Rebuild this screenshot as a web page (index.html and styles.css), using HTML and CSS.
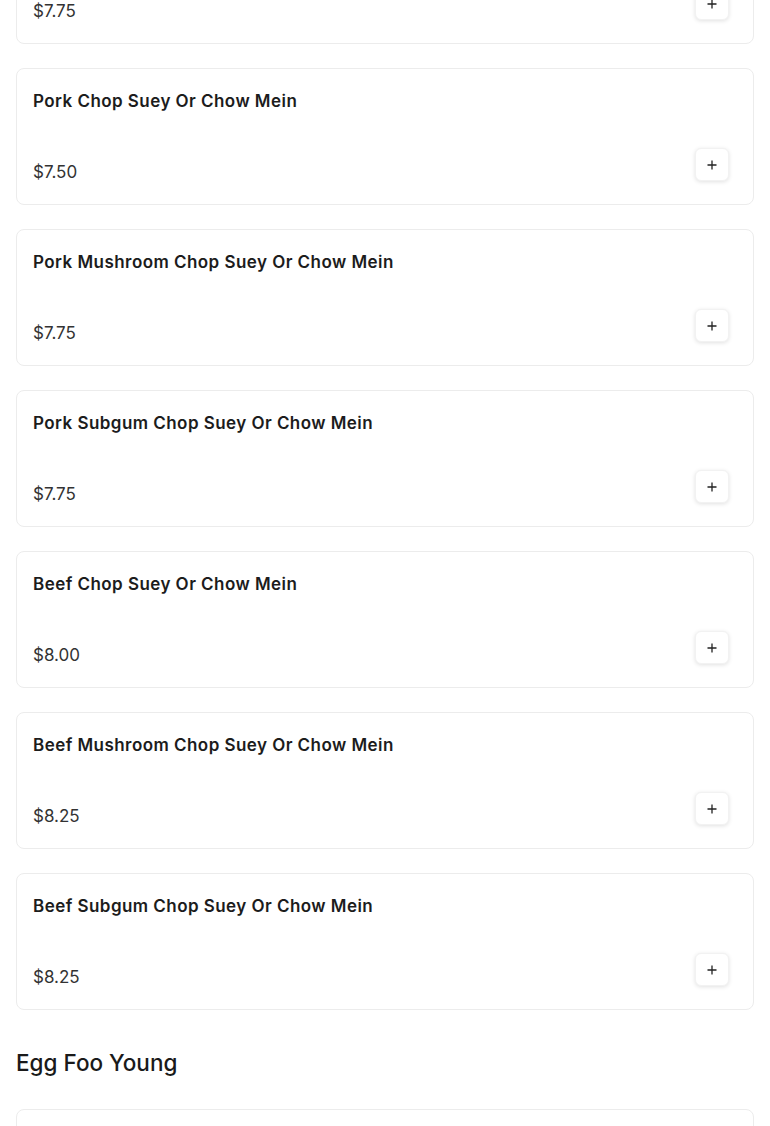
FILE: index.html
```html
<!DOCTYPE html>
<html lang="en">
<head>
  <meta charset="UTF-8">
  <meta name="viewport" content="width=device-width, initial-scale=1.0">
  <title>Menu | Chop Suey</title>
  <link rel="stylesheet" href="styles.css">
</head>
<body>

<div class="menu">
  <div class="item">
    <h3 class="item-name">Pork Subgum Chow Mein</h3>
    <div class="item-foot">
      <span class="price">$7.75</span>
      <button class="add" aria-label="Add"><svg viewBox="0 0 12 12" width="12" height="12"><path d="M6 1.5v9M1.5 6h9" stroke="#222" stroke-width="1.3" fill="none"/></svg></button>
    </div>
  </div>

  <div class="item">
    <h3 class="item-name">Pork Chop Suey Or Chow Mein</h3>
    <div class="item-foot">
      <span class="price">$7.50</span>
      <button class="add" aria-label="Add"><svg viewBox="0 0 12 12" width="12" height="12"><path d="M6 1.5v9M1.5 6h9" stroke="#222" stroke-width="1.3" fill="none"/></svg></button>
    </div>
  </div>

  <div class="item">
    <h3 class="item-name">Pork Mushroom Chop Suey Or Chow Mein</h3>
    <div class="item-foot">
      <span class="price">$7.75</span>
      <button class="add" aria-label="Add"><svg viewBox="0 0 12 12" width="12" height="12"><path d="M6 1.5v9M1.5 6h9" stroke="#222" stroke-width="1.3" fill="none"/></svg></button>
    </div>
  </div>

  <div class="item">
    <h3 class="item-name">Pork Subgum Chop Suey Or Chow Mein</h3>
    <div class="item-foot">
      <span class="price">$7.75</span>
      <button class="add" aria-label="Add"><svg viewBox="0 0 12 12" width="12" height="12"><path d="M6 1.5v9M1.5 6h9" stroke="#222" stroke-width="1.3" fill="none"/></svg></button>
    </div>
  </div>

  <div class="item">
    <h3 class="item-name">Beef Chop Suey Or Chow Mein</h3>
    <div class="item-foot">
      <span class="price">$8.00</span>
      <button class="add" aria-label="Add"><svg viewBox="0 0 12 12" width="12" height="12"><path d="M6 1.5v9M1.5 6h9" stroke="#222" stroke-width="1.3" fill="none"/></svg></button>
    </div>
  </div>

  <div class="item">
    <h3 class="item-name">Beef Mushroom Chop Suey Or Chow Mein</h3>
    <div class="item-foot">
      <span class="price">$8.25</span>
      <button class="add" aria-label="Add"><svg viewBox="0 0 12 12" width="12" height="12"><path d="M6 1.5v9M1.5 6h9" stroke="#222" stroke-width="1.3" fill="none"/></svg></button>
    </div>
  </div>

  <div class="item">
    <h3 class="item-name">Beef Subgum Chop Suey Or Chow Mein</h3>
    <div class="item-foot">
      <span class="price">$8.25</span>
      <button class="add" aria-label="Add"><svg viewBox="0 0 12 12" width="12" height="12"><path d="M6 1.5v9M1.5 6h9" stroke="#222" stroke-width="1.3" fill="none"/></svg></button>
    </div>
  </div>

  <h2 class="section-title">Egg Foo Young</h2>

  <div class="item">
    <h3 class="item-name">Pork Egg Foo Young</h3>
    <div class="item-foot">
      <span class="price">$8.50</span>
      <button class="add" aria-label="Add"><svg viewBox="0 0 12 12" width="12" height="12"><path d="M6 1.5v9M1.5 6h9" stroke="#222" stroke-width="1.3" fill="none"/></svg></button>
    </div>
  </div>
</div>

</body>
</html>
```

FILE: styles.css
```css
body {
  margin: 0;
  background-color: #fff;
  font-family: Inter, "Open Sans", sans-serif;
  color: #1a1a1a;
}

.menu {
  display: flex;
  flex-direction: column;
  gap: 24px;
  padding: 0 16px;
  margin-top: -93px;
}

.item {
  display: flex;
  flex-direction: column;
  justify-content: space-between;
  height: 137px;
  box-sizing: border-box;
  padding: 20px 24px 20px 16px;
  border: 1px solid #ececec;
  border-radius: 8px;
  background: #fff;
}

.item-name {
  margin: 0;
  font-size: 17px;
  font-weight: 600;
  line-height: 24px;
  letter-spacing: 0.45px;
  color: #1c1c1c;
}

.item-foot {
  display: flex;
  justify-content: space-between;
  align-items: flex-end;
}

.price {
  font-size: 17px;
  line-height: 24px;
  color: #333;
}

.add {
  display: flex;
  align-items: center;
  justify-content: center;
  width: 34px;
  height: 33px;
  margin-bottom: 3px;
  padding: 0;
  border: 1px solid #f2f2f2;
  border-radius: 6px;
  background: #fff;
  box-shadow: 0 1px 4px rgba(0, 0, 0, 0.12);
  cursor: pointer;
}

.section-title {
  margin: 13px 0 6px;
  font-size: 22.5px;
  font-weight: 500;
  line-height: 32px;
  color: #1a1a1a;
}
```
